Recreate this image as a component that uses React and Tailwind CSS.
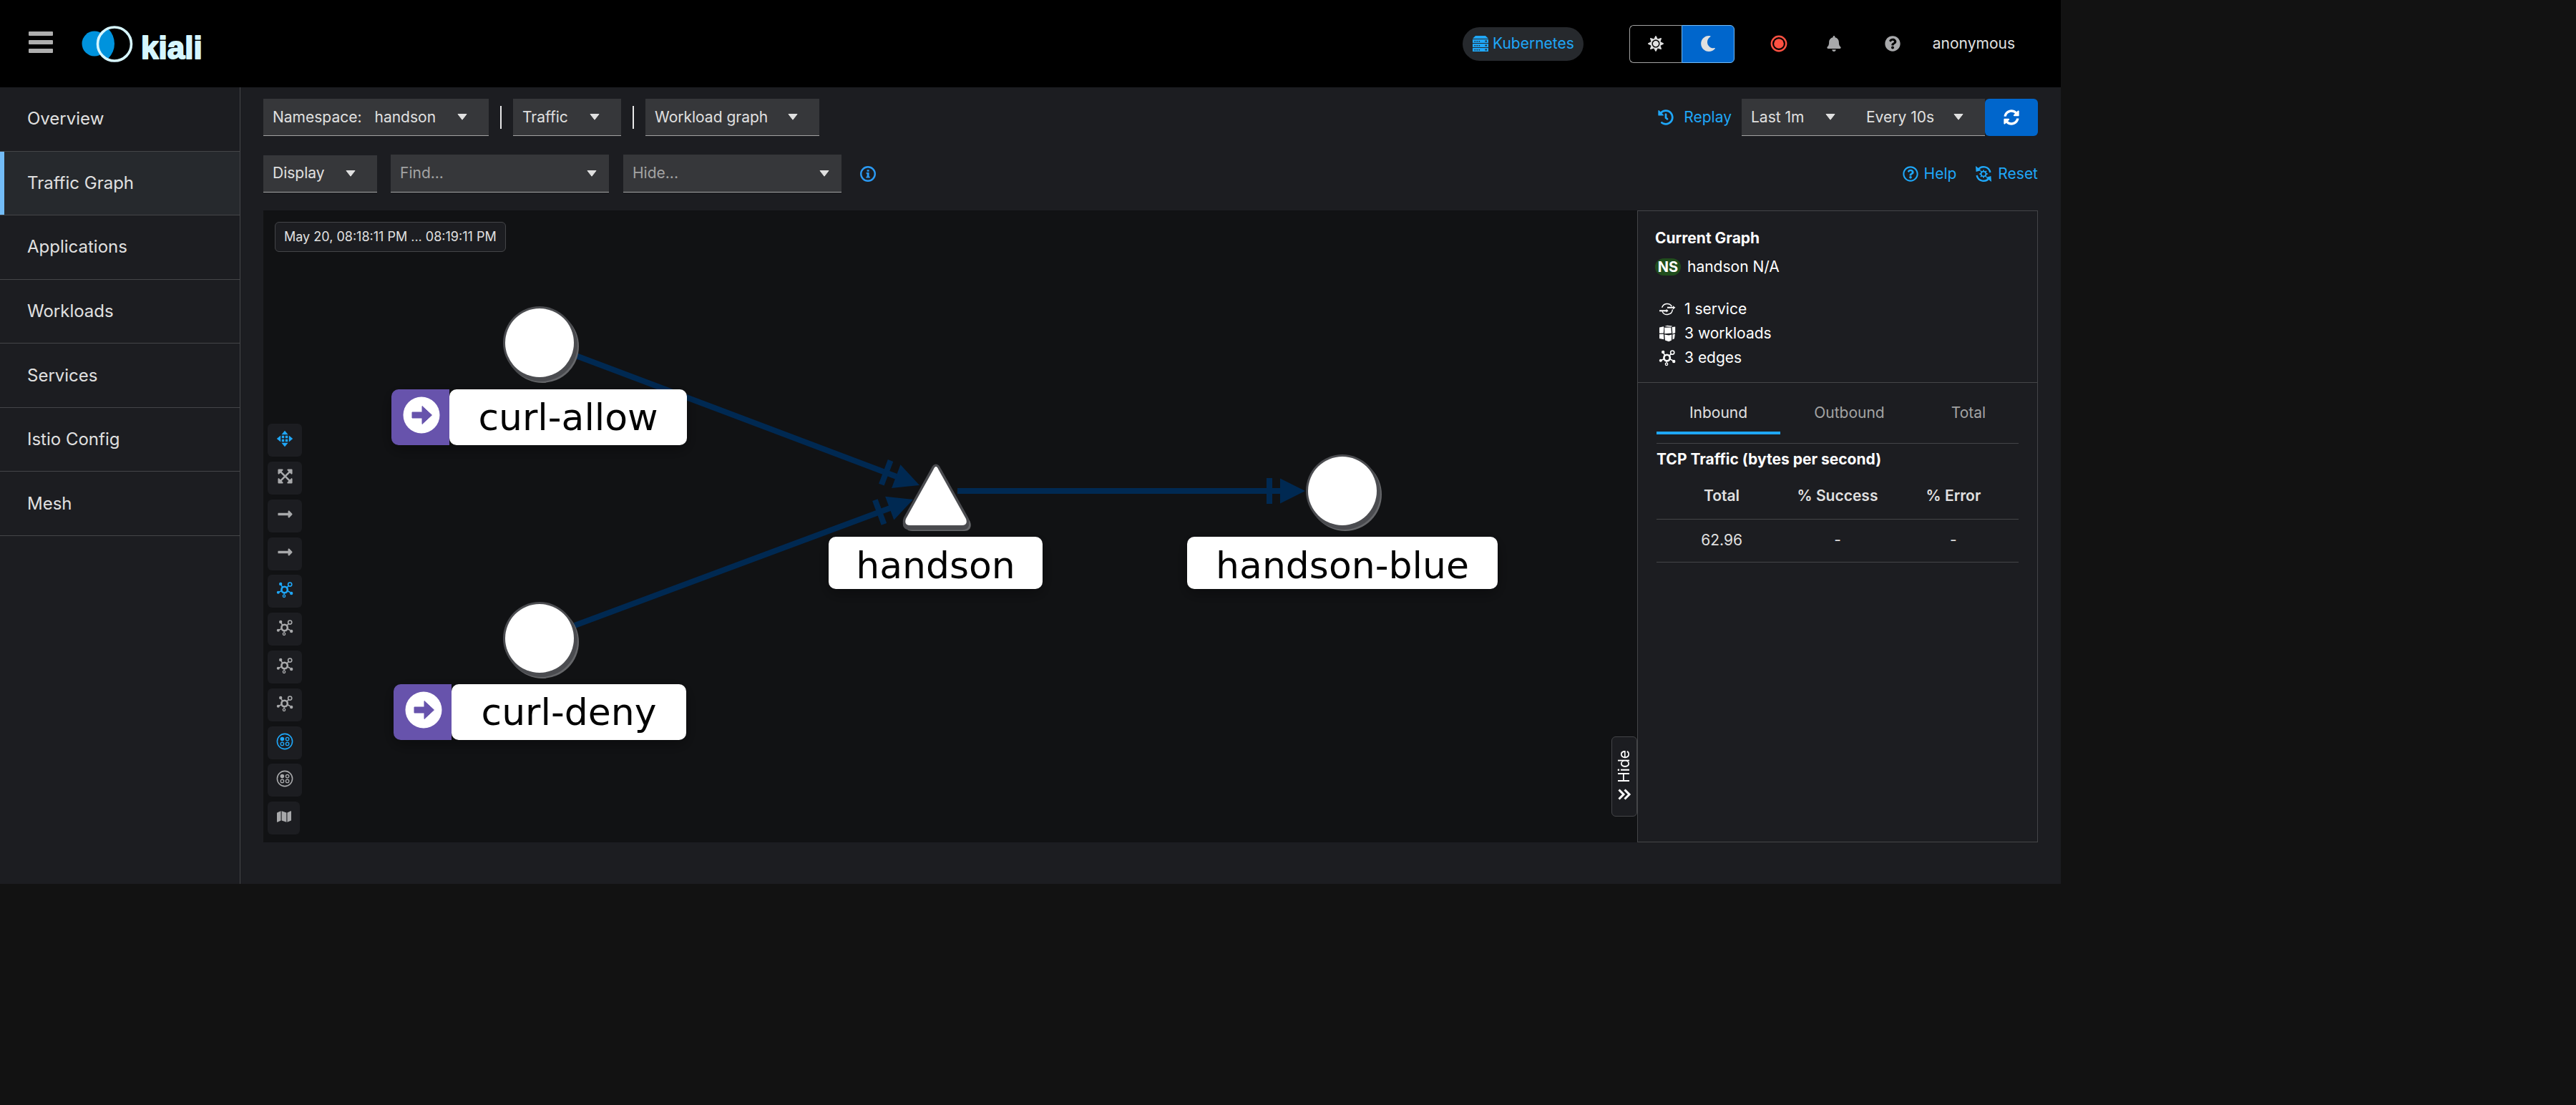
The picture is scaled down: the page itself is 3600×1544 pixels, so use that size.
import React from "react";
import {
  FaSun,
  FaMoon,
  FaBell,
  FaQuestionCircle,
  FaRegQuestionCircle,
  FaHistory,
  FaSyncAlt,
  FaExpandArrowsAlt,
  FaLongArrowAltRight,
  FaMap,
} from "react-icons/fa";

/* ---------- icons ---------- */

function Caret() {
  return (
    <svg viewBox="0 0 14 9" className="h-[9px] w-3.5 shrink-0" aria-hidden="true">
      <path d="M1 .5h12L7 8.2z" fill="currentColor" stroke="currentColor" strokeLinejoin="round" />
    </svg>
  );
}

function ClusterIcon() {
  return (
    <svg viewBox="0 0 24 24" className="size-6" fill="currentColor" aria-hidden="true">
      <path d="M5 1h14l4 4H1z" />
      {[6, 12, 18].map((y) => (
        <g key={y}>
          <path fillRule="evenodd" d={`M1 ${y}h22v5H1zM3.5 ${y + 2}v1.4h1.6v-1.4zM6.5 ${y + 2}v1.4h1.6v-1.4zM9.5 ${y + 2}v1.4h1.6v-1.4zM18.5 ${y + 1.6}v2h2.4v-2z`} />
        </g>
      ))}
    </svg>
  );
}

function RecordIcon() {
  return (
    <svg viewBox="0 0 24 24" className="size-6" aria-hidden="true">
      <circle cx="12" cy="12" r="10.2" fill="none" stroke="currentColor" strokeWidth="2.4" />
      <circle cx="12" cy="12" r="6.8" fill="currentColor" />
    </svg>
  );
}

function InfoIcon() {
  return (
    <svg viewBox="0 0 24 24" className="size-6" aria-hidden="true">
      <circle cx="12" cy="12" r="9.8" fill="none" stroke="currentColor" strokeWidth="2.4" />
      <path d="M10.6 6.2h3v2.6h-3zM9.6 10h4v5.8h1.2v1.8H9.4v-1.8h1.2v-4h-1z" fill="currentColor" />
    </svg>
  );
}

function ResetIcon() {
  return (
    <svg viewBox="0 0 24 24" className="size-6" fill="none" stroke="currentColor" aria-hidden="true">
      <path d="M4 6.5A9.6 9.6 0 0 1 21.4 10M20 17.5A9.6 9.6 0 0 1 2.6 14" strokeWidth="2.4" />
      <path d="M1 1l.6 8 7.2-2zM23 23l-.6-8-7.2 2z" fill="currentColor" stroke="none" />
      <circle cx="12" cy="12" r="3.4" strokeWidth="1.8" />
      <path d="M12 6.4v2M12 15.6v2M6.4 12h2M15.6 12h2M8 8l1.4 1.4M14.6 14.6L16 16M16 8l-1.4 1.4M9.4 14.6L8 16" strokeWidth="1.8" />
    </svg>
  );
}

function DragIcon() {
  return (
    <svg viewBox="0 0 24 24" className="size-6" fill="currentColor" aria-hidden="true">
      <path d="M12 .8l4.6 5.4H7.4zM12 23.2l4.6-5.4H7.4zM.8 12l5.4-4.6v9.2zM23.2 12l-5.4-4.6v9.2z" />
      <path d="M7.8 7.8h3.4v3.4H7.8zM12.8 7.8h3.4v3.4h-3.4zM7.8 12.8h3.4v3.4H7.8zM12.8 12.8h3.4v3.4h-3.4z" />
    </svg>
  );
}

function TopologyIcon() {
  return (
    <svg viewBox="0 0 24 24" className="size-6" fill="none" stroke="currentColor" aria-hidden="true">
      <circle cx="11.6" cy="12" r="4.2" strokeWidth="2.6" />
      <path d="M8.6 8.4L6.8 5M15 9l2.2-2.4M16 13.8l3.6 2M7.2 13.8l-3.4 1.4M11.2 16.6v2" strokeWidth="1.6" />
      <circle cx="6.2" cy="4" r="2.2" fill="currentColor" stroke="none" />
      <circle cx="19.2" cy="4.6" r="2.6" strokeWidth="1.6" />
      <circle cx="21.2" cy="17" r="2.2" fill="currentColor" stroke="none" />
      <circle cx="2.8" cy="15.8" r="2" fill="currentColor" stroke="none" />
      <circle cx="11" cy="20.8" r="1.7" strokeWidth="1.3" />
    </svg>
  );
}

function NamespaceIcon() {
  return (
    <svg viewBox="0 0 24 24" className="size-6" fill="none" stroke="currentColor" aria-hidden="true">
      <circle cx="12" cy="12" r="10.6" strokeWidth="1.6" />
      <circle cx="8.4" cy="8.6" r="2.8" fill="currentColor" stroke="none" />
      <circle cx="15.6" cy="8.6" r="2.2" strokeWidth="1.3" />
      <circle cx="8.4" cy="15.4" r="2.2" strokeWidth="1.3" />
      <circle cx="15.6" cy="15.4" r="2.2" strokeWidth="1.3" />
    </svg>
  );
}

function ServiceIcon() {
  return (
    <svg viewBox="0 0 24 24" className="size-6" fill="none" stroke="currentColor" aria-hidden="true">
      <path d="M4.6 9.8a7.6 7.6 0 0 1 13.8-1.6M19.4 12.4a7.6 7.6 0 0 1-14.4 2.8" strokeWidth="1.4" />
      <path d="M12 9.8h9M1 14.2h10.5" strokeWidth="2" />
      <path d="M20 7.2l3.4 2.6L20 12.4zM10.6 11.8l3 2.4-3 2.4z" fill="currentColor" stroke="none" />
    </svg>
  );
}

function WorkloadIcon() {
  return (
    <svg viewBox="0 0 24 24" className="size-6" fill="currentColor" aria-hidden="true">
      <path d="M1 3.4l5.8-1.2.6 1.4-.6 8L1 11.800zM1 13l5.800-.2.6 7.400L1 19zM8 2L12 .8l7 .6-1.400 1.400zM8.200 3.800l9-.4.8 8.200-9.800.6zM18.600 3l4.600-.6v8.600l-3.800 1.400zM8.200 13.400l6 1.200 4-1.200-.2 8-3.800 1.800-5.200-1.800zM19.400 13.600l3.400-1-.8 6.400-2.600 1.600z" />
    </svg>
  );
}

function DoubleChevron() {
  return (
    <svg viewBox="0 0 20 16" className="h-4 w-5" fill="none" stroke="currentColor" strokeWidth="3" aria-hidden="true">
      <path d="M2.5 1.5L9 8l-6.5 6.5M10.5 1.5L17 8l-6.5 6.5" />
    </svg>
  );
}

function KialiLogo() {
  return (
    <a href="#home" aria-label="Kiali" className="block">
      <svg viewBox="0 0 190 60" className="h-[60px] w-[190px]" role="img">
        <defs>
          <clipPath id="ring-clip">
            <circle cx="47" cy="30.5" r="23" />
          </clipPath>
        </defs>
        <circle cx="19" cy="30" r="17.5" fill="#0093dd" />
        <circle cx="47" cy="30.5" r="24" fill="#000" />
        <circle cx="18" cy="30" r="29" fill="#0093dd" clipPath="url(#ring-clip)" />
        <circle cx="47" cy="30.5" r="23.5" fill="none" stroke="#d6f6fe" strokeWidth="3.6" />
        <text x="84" y="51" fill="#d6f6fe" stroke="#d6f6fe" strokeWidth="2" strokeLinejoin="round" className="font-['Liberation_Sans',sans-serif] text-[44px] font-bold">
          kiali
        </text>
      </svg>
    </a>
  );
}

/* ---------- shared controls ---------- */

function Toggle({ children, className = "" }) {
  return (
    <button
      type="button"
      aria-haspopup="listbox"
      className={`flex h-[52px] items-center justify-between border-b border-[#a3a3a3] bg-[#36373a] pr-[30px] pl-[13px] ${className}`}
    >
      <span className="flex gap-[18px]">{children}</span>
      <Caret />
    </button>
  );
}

function SearchBox({ label }) {
  return (
    <div className="flex h-[53px] w-[305px] items-center border-b border-[#a3a3a3] bg-[#36373a] pr-[17px] pl-[13px]">
      <input
        type="text"
        aria-label={label}
        placeholder={`${label}...`}
        className="w-full min-w-0 bg-transparent outline-none placeholder:text-[#a3a3a3]"
      />
      <button type="button" aria-label={`${label} options`}>
        <Caret />
      </button>
    </div>
  );
}

/* ---------- masthead ---------- */

function Masthead() {
  return (
    <header className="flex h-[122px] items-center justify-between bg-black pr-16 pl-10">
      <div className="flex items-center gap-[39px]">
        <button type="button" aria-label="Global navigation" className="flex w-[34px] flex-col gap-1.5 pb-1">
          <span className="h-1.5 rounded-[1px] bg-[#aeaeae]" />
          <span className="h-1.5 rounded-[1px] bg-[#aeaeae]" />
          <span className="h-1.5 rounded-[1px] bg-[#aeaeae]" />
        </button>
        <KialiLogo />
      </div>
      <div className="flex items-center">
        <a href="#cluster" className="flex h-[47px] items-center gap-[5px] rounded-full bg-[#26292d] px-[13px] text-[#1fa7f8]">
          <ClusterIcon />
          Kubernetes
        </a>
        <div className="ml-16 flex h-[53px]">
          <button type="button" aria-label="Light theme" className="flex w-[73px] items-center justify-center rounded-l-md border border-r-0 border-[#a3a3a3] text-[22px]">
            <FaSun />
          </button>
          <button type="button" aria-label="Dark theme" aria-pressed="true" className="flex w-[74px] items-center justify-center rounded-r-md border border-[#73bcf7] bg-[#0066cc] text-[22px]">
            <FaMoon />
          </button>
        </div>
        <button type="button" aria-label="Recording status" className="ml-[50px] text-[#fe5142]">
          <RecordIcon />
        </button>
        <button type="button" aria-label="Notifications" className="ml-[54px] text-[22px] text-[#a8a9ab]">
          <FaBell />
        </button>
        <button type="button" aria-label="Help" className="ml-[60px] text-[22px] text-[#a8a9ab]">
          <FaQuestionCircle />
        </button>
        <button type="button" className="ml-[45px]">
          anonymous
        </button>
      </div>
    </header>
  );
}

/* ---------- side navigation ---------- */

const NAV = ["Overview", "Traffic Graph", "Applications", "Workloads", "Services", "Istio Config", "Mesh"];

function SideNav() {
  return (
    <nav className="w-[336px] shrink-0 border-r border-[#444548] bg-[#1c1d21] text-2xl">
      <ul className="grid h-[627px] auto-rows-fr">
        {NAV.map((item) => {
          const active = item === "Traffic Graph";
          return (
            <li key={item} className="border-b border-[#444548]">
              <a
                href={`#${item}`}
                aria-current={active ? "page" : undefined}
                className={`flex h-full items-center border-l-6 pl-8 ${active ? "border-[#73bcf7] bg-[#26292d]" : "border-transparent"}`}
              >
                {item}
              </a>
            </li>
          );
        })}
      </ul>
    </nav>
  );
}

/* ---------- toolbar ---------- */

function Toolbar() {
  return (
    <div className="flex flex-col gap-[26px]">
      <div className="flex items-center justify-between">
        <div className="flex items-center">
          <Toggle className="w-[315px]">
            <span>Namespace:</span>
            <span>handson</span>
          </Toggle>
          <span className="mx-4 h-8 w-0.5 bg-[#e8e8e8]" />
          <Toggle className="w-[151px]">Traffic</Toggle>
          <span className="mx-4 h-8 w-0.5 bg-[#e8e8e8]" />
          <Toggle className="w-[243px]">Workload graph</Toggle>
        </div>
        <div className="flex items-center">
          <button type="button" className="mr-3.5 flex items-center gap-3.5 text-[#1fa7f8]">
            <FaHistory className="text-[22px]" />
            Replay
          </button>
          <Toggle className="w-[161px]">Last 1m</Toggle>
          <Toggle className="w-[179px]">Every 10s</Toggle>
          <button type="button" aria-label="Refresh" className="flex h-[52px] w-[74px] items-center justify-center rounded-md bg-[#0066cc] text-[22px] text-white">
            <FaSyncAlt />
          </button>
        </div>
      </div>
      <div className="flex items-center justify-between">
        <div className="flex items-center">
          <Toggle className="mr-[19px] w-[159px]">Display</Toggle>
          <SearchBox label="Find" />
          <span className="w-5" />
          <SearchBox label="Hide" />
          <button type="button" aria-label="Find and hide help" className="ml-[25px] text-[#2b9af3]">
            <InfoIcon />
          </button>
        </div>
        <div className="flex items-center gap-[26px] text-[#1fa7f8]">
          <button type="button" className="flex items-center gap-2">
            <FaRegQuestionCircle className="text-[22px]" />
            Help
          </button>
          <button type="button" className="flex items-center gap-2">
            <ResetIcon />
            Reset
          </button>
        </div>
      </div>
    </div>
  );
}

/* ---------- graph canvas ---------- */

function Edge({ x1, y1, x2, y2 }) {
  const angle = (Math.atan2(y2 - y1, x2 - x1) * 180) / Math.PI;
  const length = Math.hypot(x2 - x1, y2 - y1);
  return (
    <g transform={`translate(${x1} ${y1}) rotate(${angle})`} fill="#002952">
      <rect x="0" y="-4" width={length - 20} height="8" />
      <rect x={length - 54} y="-18" width="8" height="36" />
      <path d={`M${length - 35} -17.5L${length} 0l-35 17.5z`} />
    </g>
  );
}

function CircleNode({ cx, cy }) {
  return (
    <g>
      <circle cx={cx + 4} cy={cy + 5} r="51" fill="#66676a" />
      <circle cx={cx + 2} cy={cy + 3} r="51" fill="#4b4c50" />
      <circle cx={cx} cy={cy} r="51" fill="#4b4c50" />
      <circle cx={cx} cy={cy} r="48" fill="#fff" />
    </g>
  );
}

function TriangleNode({ x, y }) {
  const d = "M-3.5 6Q0 -2 3.5 6L42 75Q45 84 36 84H-36Q-45 84 -42 75Z";
  return (
    <g transform={`translate(${x} ${y})`} strokeLinejoin="round">
      <path d={d} transform="translate(3 5)" fill="#66676a" stroke="#66676a" strokeWidth="6" />
      <path d={d} transform="translate(0 3)" fill="#4b4c50" stroke="#4b4c50" strokeWidth="7" />
      <path d={d} fill="#fff" stroke="#4b4c50" strokeWidth="7" />
      <path d={d} fill="#fff" />
    </g>
  );
}

function NodeLabel({ x, y, width, height, text, root }) {
  const split = x + 81;
  const left = root ? split : x;
  const right = x + width;
  return (
    <g>
      <rect x={x} y={y + 6} width={width} height={height} rx="10" fill="#000" filter="url(#label-shadow)" />
      {root && (
        <>
          <path d={`M${x + 10} ${y}H${split}v${height}H${x + 10}a10 10 0 0 1 -10 -10V${y + 10}a10 10 0 0 1 10 -10z`} fill="#6753ac" />
          <circle cx={x + 42} cy={y + 36} r="25.5" fill="#fff" />
          <path d={`M${x + 29} ${y + 32}h14v-8.5l13.5 12.5l-13.5 12.5v-8.5h-14z`} fill="#6753ac" stroke="#6753ac" strokeLinejoin="round" />
        </>
      )}
      <rect x={left} y={y} width={right - left} height={height} rx="10" fill="#fff" />
      <text
        x={(left + right) / 2}
        y={y + (root ? 57 : 58)}
        textAnchor="middle"
        fill="#030303"
        className="font-['DejaVu_Sans',sans-serif] text-[52px]"
      >
        {text}
      </text>
    </g>
  );
}

function Graph() {
  return (
    <svg width="1920" height="883" viewBox="0 0 1920 883" className="absolute top-0 left-0 max-w-none" role="img" aria-label="Traffic graph">
      <defs>
        <filter id="label-shadow" x="-20%" y="-40%" width="140%" height="200%">
          <feGaussianBlur stdDeviation="10" />
          <feComponentTransfer>
            <feFuncA type="linear" slope="0.35" />
          </feComponentTransfer>
        </filter>
      </defs>
      <Edge x1={437} y1={203} x2={917} y2={384} />
      <Edge x1={435} y1={580} x2={908} y2={404} />
      <Edge x1={970} y1={392} x2={1456} y2={392} />
      <CircleNode cx={386} cy={185} />
      <CircleNode cx={386} cy={598} />
      <CircleNode cx={1508} cy={392} />
      <TriangleNode x={940} y={356} />
      <NodeLabel x={179} y={250} width={413} height={78} text="curl-allow" root />
      <NodeLabel x={182} y={662} width={409} height={78} text="curl-deny" root />
      <NodeLabel x={790} y={456} width={299} height={73} text="handson" />
      <NodeLabel x={1291} y={456} width={434} height={73} text="handson-blue" />
    </svg>
  );
}

const TOOLS = [
  { name: "Drag", icon: <DragIcon />, active: true },
  { name: "Fit to view", icon: <FaExpandArrowsAlt className="text-[23px]" /> },
  { name: "Hide healthy edges", icon: <FaLongArrowAltRight className="text-[23px]" /> },
  { name: "Hide edges", icon: <FaLongArrowAltRight className="text-[23px]" /> },
  { name: "Dagre layout", icon: <TopologyIcon />, active: true },
  { name: "Grid layout", icon: <TopologyIcon /> },
  { name: "Concentric layout", icon: <TopologyIcon /> },
  { name: "Breadth-first layout", icon: <TopologyIcon /> },
  { name: "Namespace layout 1", icon: <NamespaceIcon />, active: true },
  { name: "Namespace layout 2", icon: <NamespaceIcon /> },
  { name: "Legend", icon: <FaMap className="text-[20px]" />, narrow: true },
];

function Canvas() {
  return (
    <section className="relative min-w-0 flex-1 overflow-hidden bg-[#111214]">
      <Graph />
      <div className="absolute top-4 left-4 flex h-[42px] items-center rounded-md border border-[#444548] bg-[#1c1d21] px-3 text-lg whitespace-nowrap">
        May 20, 08:18:11 PM ... 08:19:11 PM
      </div>
      <div className="absolute bottom-[11px] left-1.5 flex h-[574px] flex-col justify-between">
        {TOOLS.map((tool) => (
          <button
            key={tool.name}
            type="button"
            aria-label={tool.name}
            className={`flex h-[46px] items-center justify-center rounded-md bg-[#1c1d21] pb-1 ${tool.narrow ? "w-[45px]" : "w-12"} ${tool.active ? "text-[#1fa7f8]" : "text-[#a8a9ab]"}`}
          >
            {tool.icon}
          </button>
        ))}
      </div>
      <button type="button" className="absolute right-0 bottom-9 flex h-28 w-9 flex-col items-center gap-2 rounded-md border border-[#444548] bg-[#1c1d21] pt-[18px] text-white">
        <span className="rotate-180 leading-6 [writing-mode:vertical-rl]">Hide</span>
        <DoubleChevron />
      </button>
    </section>
  );
}

/* ---------- summary panel ---------- */

function SummaryPanel() {
  return (
    <aside className="w-[560px] shrink-0 border border-[#444548] bg-[#1c1d21]">
      <div className="h-[240px] border-b border-[#444548] px-6 pt-[22px] text-white">
        <h2 className="leading-8 font-bold">Current Graph</h2>
        <div className="mt-2 flex h-8 items-center gap-[9px]">
          <span className="flex h-6 w-9 items-center justify-center rounded-xl bg-[#204d1c] text-xl font-bold">NS</span>
          handson N/A
        </div>
        <ul className="mt-[26px] pl-[5px]">
          <li className="flex h-[34px] items-center gap-3"><ServiceIcon />1 service</li>
          <li className="flex h-[34px] items-center gap-3"><WorkloadIcon />3 workloads</li>
          <li className="flex h-[34px] items-center gap-3"><TopologyIcon />3 edges</li>
        </ul>
      </div>
      <div className="px-[26px] pt-4">
        <div role="tablist" className="flex h-[69px] border-b border-[#444548] pb-3">
          <button type="button" role="tab" aria-selected="true" className="w-[173px] border-b-4 border-[#1fa7f8]">Inbound</button>
          <button type="button" role="tab" aria-selected="false" className="w-[193px] pb-1 text-[#a3a3a3]">Outbound</button>
          <button type="button" role="tab" aria-selected="false" className="w-[140px] pb-1 text-[#a3a3a3]">Total</button>
        </div>
        <h3 className="mt-1.5 leading-8 font-bold text-white">TCP Traffic (bytes per second)</h3>
        <table className="w-full table-fixed text-center">
          <thead>
            <tr className="h-[67px] border-b border-[#444548]">
              <th scope="col" className="w-[36%] pt-1 font-semibold">Total</th>
              <th scope="col" className="w-[28%] pt-1 font-semibold">% Success</th>
              <th scope="col" className="w-[36%] pt-1 font-semibold">% Error</th>
            </tr>
          </thead>
          <tbody>
            <tr className="h-[60px] border-b border-[#444548]">
              <td>62.96</td>
              <td>-</td>
              <td>-</td>
            </tr>
          </tbody>
        </table>
      </div>
    </aside>
  );
}

export default function App() {
  return (
    <div className="min-h-screen bg-[#121212] font-['Inter',sans-serif] text-[21px] leading-8 text-[#e0e0e0]">
      <div className="flex min-h-[80vh] w-4/5 flex-col bg-[#1c1d21]">
        <Masthead />
        <div className="flex flex-1">
          <SideNav />
          <main className="flex min-w-0 flex-1 flex-col gap-[25px] px-8 pt-4 pb-[58px]">
            <Toolbar />
            <div className="flex min-h-[640px] flex-1">
              <Canvas />
              <SummaryPanel />
            </div>
          </main>
        </div>
      </div>
    </div>
  );
}
